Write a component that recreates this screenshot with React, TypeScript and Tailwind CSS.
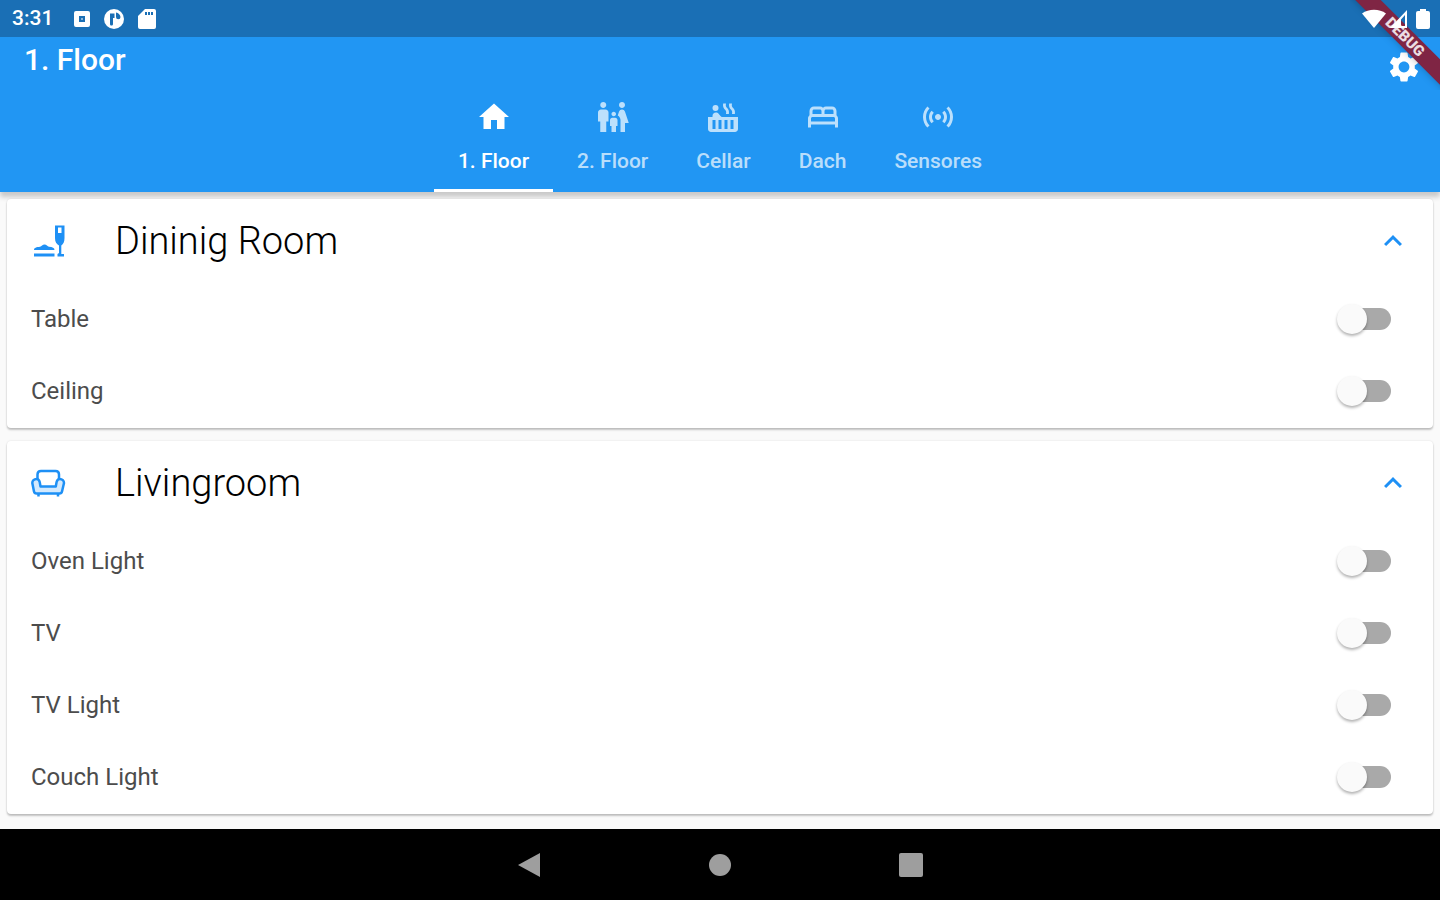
import { useState } from 'react';
import type { ReactNode } from 'react';
import {
  MdExpandLess,
  MdFamilyRestroom,
  MdHome,
  MdHotTub,
  MdOutlineBed,
  MdSensors,
  MdSettings,
} from 'react-icons/md';

interface Tab {
  label: string;
  icon: ReactNode;
}

interface Room {
  name: string;
  icon: ReactNode;
  devices: string[];
}

const tabs: Tab[] = [
  { label: '1. Floor', icon: <MdHome /> },
  { label: '2. Floor', icon: <MdFamilyRestroom /> },
  { label: 'Cellar', icon: <MdHotTub /> },
  { label: 'Dach', icon: <MdOutlineBed /> },
  { label: 'Sensores', icon: <MdSensors /> },
];

const rooms: Room[] = [
  { name: 'Dininig Room', icon: <DiningIcon />, devices: ['Table', 'Ceiling'] },
  {
    name: 'Livingroom',
    icon: <ArmchairIcon />,
    devices: ['Oven Light', 'TV', 'TV Light', 'Couch Light'],
  },
];

function DiningIcon() {
  return (
    <svg width="36" height="36" viewBox="0 0 36 36" fill="currentColor">
      <path d="M3 30.500h20.500v3H3z" />
      <path d="M3 27c0-2.200 2.500-2.800 6-3.200 1.500-.3 2.500-2.300 4.500-2.300s3 2 4.500 2.300c3.500.4 5.500 1 5.500 3.200z" />
      <path d="M24 2.500h9.500V15c0 4-1.200 6-3.200 7.500V31h2.700v2.500h-6.500V31l1.500-1v-7.500c-2.500-1.500-4-3.500-4-7.500zM27 4.500V10h3.500V4.500z" fillRule="evenodd" />
    </svg>
  );
}

function ArmchairIcon() {
  return (
    <svg width="36" height="36" viewBox="0 0 36 36" fill="none" stroke="currentColor" strokeWidth="2.500" strokeLinejoin="round">
      <path fill="#d3e9fd" d="M5.500 14C3 14 1.300 15.800 1.300 18L3 26.500c.3 1.500 1.200 2 2.500 2h23c1.300 0 2.200-.5 2.500-2L33 18c0-2.200-1.700-4-4.200-4-2 0-2.800 1.500-3.200 3l-.8 4.500H9.500L8.700 17c-.4-1.500-1.200-3-3.200-3z" />
      <path d="M6.500 14V9.500c0-2.200 1.300-3.500 3.500-3.500h14.500C26.700 6 28 7.300 28 9.500V14" />
      <path d="M7.500 28v3.500M27 28v3.500" />
    </svg>
  );
}

function StatusBar() {
  return (
    <div className="flex h-[37px] items-center justify-between bg-[#1a6fb5] pl-3 pr-[10px]">
      <div className="flex items-center">
        <span className="text-[21px] font-medium">3:31</span>
        <svg className="ml-5" width="18" height="18" viewBox="0 0 18 18">
          <path fill="#fff" fillRule="evenodd" d="M3 1h12a2 2 0 0 1 2 2v12a2 2 0 0 1-2 2H3a2 2 0 0 1-2-2V3a2 2 0 0 1 2-2zM5 5v8h8V5z" />
          <path fill="#fff" d="M5 5h8v8H5z" />
          <path fill="#1a6fb5" d="M6 6h6v6H6z" />
          <path fill="#fff" fillOpacity=".5" d="M8 8h2v2H8z" />
        </svg>
        <svg className="ml-3" width="22" height="22" viewBox="0 0 22 22">
          <circle cx="11" cy="11" r="10" fill="#fff" />
          <path fill="#1a6fb5" d="M7 5.500h4.500v4.500H10v6c0 1-.7 1.500-1.500 1.500S7 17 7 16z" />
          <path fill="#1a6fb5" d="M13 4.500c2.500.5 4 2 4.500 4.500a2.200 2.200 0 0 1-4.500 0z" />
        </svg>
        <svg className="ml-3" width="20" height="22" viewBox="0 0 20 22">
          <path fill="#fff" d="M8 1h9a2 2 0 0 1 2 2v16a2 2 0 0 1-2 2H3a2 2 0 0 1-2-2V8z" />
          <path fill="#1a6fb5" d="M8 4h2v3H8zM11 4h2v3h-2zM14 4h2v3h-2z" />
        </svg>
      </div>
      <div className="relative z-20 flex items-center">
        <svg width="24" height="20" viewBox="0 0 24 20">
          <path fill="#fff" d="M12 19 0 4.500C3.500 2 7.500.8 12 .8S20.500 2 24 4.500z" />
        </svg>
        <svg className="ml-1" width="18" height="20" viewBox="0 0 18 20">
          <path fill="#fff" fillRule="evenodd" d="M17 1v18H0zM15 6l-4 4.500V17h4z" />
        </svg>
        <svg className="ml-2" width="14" height="20" viewBox="0 0 14 20">
          <path fill="#fff" d="M4 0h6v2h2a2 2 0 0 1 2 2v14a2 2 0 0 1-2 2H2a2 2 0 0 1-2-2V4a2 2 0 0 1 2-2h2z" />
        </svg>
      </div>
    </div>
  );
}

function DebugBanner() {
  return (
    <div className="pointer-events-none absolute right-0 top-0 z-10 h-[90px] w-[90px] overflow-hidden">
      <div className="absolute -left-[25px] top-[28px] h-[18px] w-40 rotate-45 bg-[#7f2544] text-center text-[15px] font-black leading-[18px] text-white/85 shadow-md">
        DEBUG
      </div>
    </div>
  );
}

function RoomCard({ room }: { room: Room }) {
  const [open, setOpen] = useState(true);

  return (
    <section className="relative rounded-sm bg-white pb-px shadow-[0_2px_2px_rgba(0,0,0,0.22),0_0_2px_rgba(0,0,0,0.12)]">
      <h2>
        <button
          type="button"
          aria-expanded={open}
          onClick={() => setOpen(!open)}
          className="flex h-[84px] w-full items-center pl-6 pr-[22px] text-left text-4xl text-[#1e90f5]"
        >
          {room.icon}
          <span className="ml-12 flex-1 text-[38px] font-light text-black">{room.name}</span>
          <MdExpandLess className={open ? '' : 'rotate-180'} />
        </button>
      </h2>
      {open &&
        room.devices.map(device => (
          <label key={device} className="flex h-[72px] items-center justify-between pl-6 pr-[42px] text-2xl text-[#4c4c4c]">
            {device}
            <input
              type="checkbox"
              role="switch"
              className="relative h-[30px] w-[54px] appearance-none before:absolute before:right-0 before:top-1 before:h-[22px] before:w-[50px] before:rounded-full before:bg-[#a9a9a9] after:absolute after:left-0 after:top-0 after:h-[30px] after:w-[30px] after:rounded-full after:bg-[#fafafa] after:shadow-[0_2px_3px_rgba(0,0,0,0.3)] checked:before:bg-[#90caf9] checked:after:left-6 checked:after:bg-[#2196f3]"
            />
          </label>
        ))}
    </section>
  );
}

export default function App() {
  const [active, setActive] = useState('1. Floor');

  return (
    <div className="relative flex min-h-screen flex-col bg-[#fafafa] font-[Roboto,sans-serif]">
      <header className="bg-[#2196f3] text-white shadow-[0_5px_5px_rgba(0,0,0,0.2)]">
        <StatusBar />
        <DebugBanner />
        <div className="flex h-[47px] items-start justify-between pl-6 pr-[18px]">
          <h1 className="text-3xl font-medium leading-[46px]">{active}</h1>
          <button type="button" aria-label="Settings" className="mt-3 text-4xl">
            <MdSettings />
          </button>
        </div>
        <nav className="flex justify-center">
          {tabs.map(tab => (
            <button
              key={tab.label}
              type="button"
              onClick={() => setActive(tab.label)}
              className={`flex h-[108px] flex-col items-center border-b-3 px-6 pt-[15px] text-[21px] font-medium leading-6 ${
                tab.label === active ? 'border-white' : 'border-transparent text-white/70'
              }`}
            >
              <span className="mb-[14px] text-4xl">{tab.icon}</span>
              {tab.label}
            </button>
          ))}
        </nav>
      </header>

      <main className="flex flex-1 flex-col gap-[13px] px-[7px] pb-[14px] pt-[7px]">
        {rooms.map(room => (
          <RoomCard key={room.name} room={room} />
        ))}
      </main>

      <footer className="relative flex h-[71px] items-center justify-center gap-[168px] bg-black text-[#9e9e9e]">
        <button type="button" aria-label="Back">
          <svg width="24" height="26" viewBox="0 0 24 26" fill="currentColor">
            <path d="M23 1v24L1 13z" />
          </svg>
        </button>
        <button type="button" aria-label="Home" className="h-[22px] w-[22px] rounded-full bg-[#9e9e9e]" />
        <button type="button" aria-label="Recent apps" className="h-6 w-6 rounded-xs bg-[#9e9e9e]" />
      </footer>
    </div>
  );
}
